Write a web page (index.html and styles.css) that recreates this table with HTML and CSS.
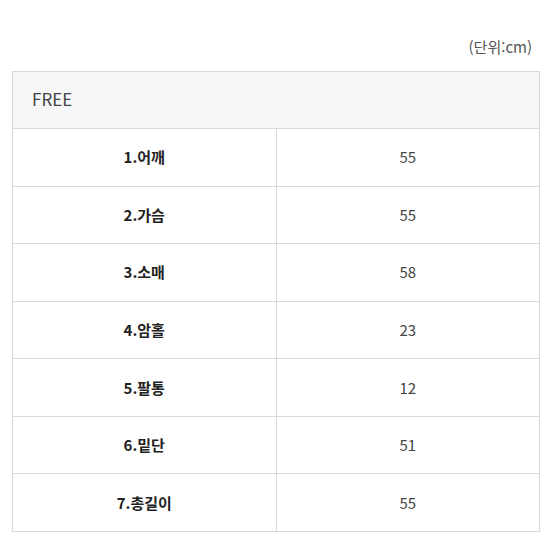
FILE: index.html
```html
<!DOCTYPE html>
<html lang="ko">
<head>
<meta charset="utf-8">
<link rel="stylesheet" href="styles.css">
</head>
<body>
<div class="wrap">
  <div class="unit">(단위:cm)</div>
  <table class="size">
    <thead>
      <tr><th colspan="2" class="head">FREE</th></tr>
    </thead>
    <tbody>
      <tr><td class="label">1.어깨</td><td class="val">55</td></tr>
      <tr><td class="label">2.가슴</td><td class="val">55</td></tr>
      <tr><td class="label">3.소매</td><td class="val">58</td></tr>
      <tr><td class="label">4.암홀</td><td class="val">23</td></tr>
      <tr><td class="label">5.팔통</td><td class="val">12</td></tr>
      <tr><td class="label">6.밑단</td><td class="val">51</td></tr>
      <tr><td class="label">7.총길이</td><td class="val">55</td></tr>
    </tbody>
  </table>
</div>
</body>
</html>
```

FILE: styles.css
```css
html, body {
  margin: 0;
  padding: 0;
  background: #fff;
}
body {
  font-family: "Noto Sans CJK KR", "Noto Sans", sans-serif;
  color: #333;
}
.wrap {
  padding: 37px 13px 0 12px;
}
.unit {
  text-align: right;
  font-size: 15px;
  line-height: 20px;
  color: #555;
  padding-right: 8px;
  height: 34px;
}
.size {
  width: 528px;
  border-collapse: collapse;
  table-layout: fixed;
  border: 1px solid #d9d9d9;
}
.size th, .size td {
  border: 1px solid #d9d9d9;
  padding: 0;
}
.head {
  background: #f6f7f9;
  text-align: left;
  font-weight: normal;
  font-size: 17px;
  color: #444;
  height: 53px;
  padding: 0 0 3px 19px !important;
}
.size tbody tr {
  height: 57.57px;
}
.label {
  text-align: center;
  font-weight: bold;
  font-size: 15px;
  color: #222;
  width: 50%;
  padding-bottom: 1px !important;
}
.val {
  text-align: center;
  font-size: 15px;
  color: #444;
  padding-bottom: 1px !important;
}
```
